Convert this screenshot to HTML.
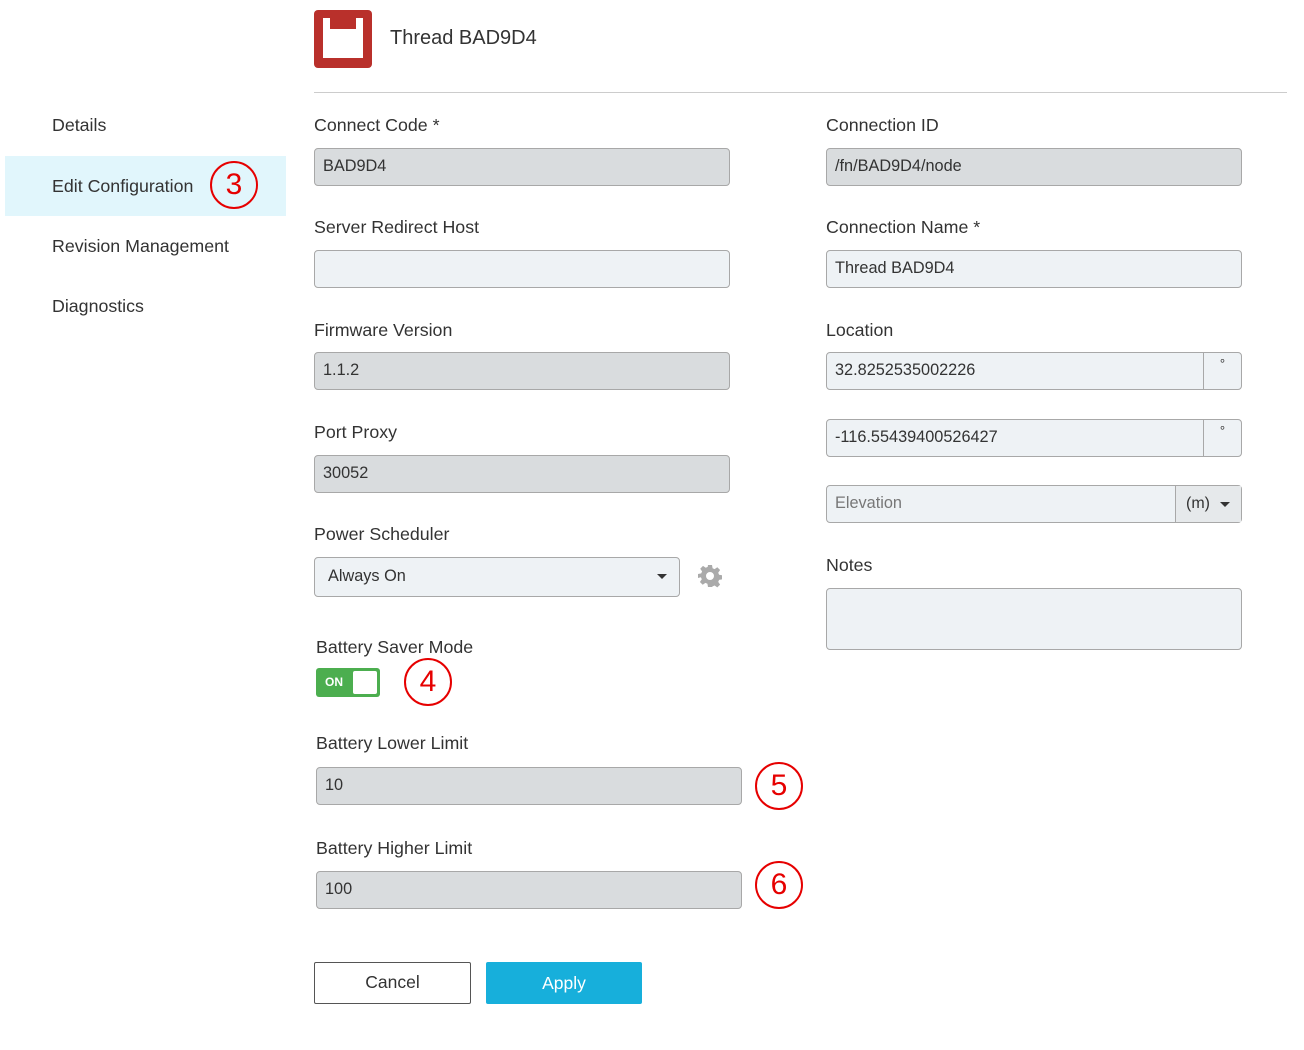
<!DOCTYPE html>
<html><head><style>
*{box-sizing:border-box;margin:0;padding:0}
body{width:1304px;height:1050px;background:#fff;font-family:"Liberation Sans",sans-serif;color:#333;position:relative;overflow:hidden}
.a{position:absolute}
.lbl{position:absolute;font-size:17.8px;color:#333}
.in{position:absolute;height:38px;border:1.5px solid #a8a8a8;border-radius:4px;font-size:16.3px;padding:0 8px;line-height:35px;color:#333}
.g{background:#d9dcde}
.l{background:#eef2f5}
.nav{position:absolute;left:52px;font-size:17.8px;color:#333}
.c{position:absolute;width:48px;height:48px;border:2.5px solid #e60000;border-radius:50%;color:#e60000;font-size:30px;text-align:center;line-height:43px}
.deg{position:absolute;right:0;top:0;bottom:0;width:38px;border-left:1.5px solid #a8a8a8;text-align:center;line-height:22px;font-size:13px}
</style></head><body>
<div class="a" style="left:314px;top:10px;width:58px;height:58px;background:#b9302b;border-radius:4px"></div>
<svg class="a" style="left:314px;top:10px" width="58" height="58"><path d="M9 8h7v11h26v-11h7v40h-40z" fill="#fff"/></svg>
<div class="a" style="left:390px;top:27px;font-size:20px;color:#333">Thread BAD9D4</div>
<div class="a" style="left:314px;top:92px;width:973px;height:1px;background:#ccc"></div>

<div class="a" style="left:5px;top:156px;width:281px;height:60px;background:#e1f6fc"></div>
<div class="nav" style="top:115px">Details</div>
<div class="nav" style="top:176px">Edit Configuration</div>
<div class="nav" style="top:236px">Revision Management</div>
<div class="nav" style="top:296px">Diagnostics</div>
<div class="c" style="left:210px;top:161px">3</div>

<div class="lbl" style="left:314px;top:115px">Connect Code *</div>
<div class="in g" style="left:314px;top:148px;width:416px">BAD9D4</div>
<div class="lbl" style="left:314px;top:217px">Server Redirect Host</div>
<div class="in l" style="left:314px;top:250px;width:416px"></div>
<div class="lbl" style="left:314px;top:320px">Firmware Version</div>
<div class="in g" style="left:314px;top:352px;width:416px">1.1.2</div>
<div class="lbl" style="left:314px;top:422px">Port Proxy</div>
<div class="in g" style="left:314px;top:455px;width:416px">30052</div>
<div class="lbl" style="left:314px;top:524px">Power Scheduler</div>
<div class="in l" style="left:314px;top:557px;width:366px;height:40px;padding-left:13px;line-height:37px">Always On<span style="position:absolute;right:12px;top:16px;border:5px solid transparent;border-top:5px solid #333;border-bottom:0"></span></div>
<svg class="a" style="left:698px;top:564px" width="24" height="24" viewBox="0 0 24 24"><path fill="#aaa" d="M10 1h4l.6 3.2 2 .9 2.7-1.9 2.8 2.8-1.9 2.7.9 2 3.2.6v4l-3.2.6-.9 2 1.9 2.7-2.8 2.8-2.7-1.9-2 .9L14 23h-4l-.6-3.2-2-.9-2.7 1.9-2.8-2.8 1.9-2.7-.9-2L0 14v-4l3.2-.6.9-2L2.2 4.7 5 1.9l2.7 1.9 2-.9zM12 8a4 4 0 100 8 4 4 0 000-8z"/></svg>
<div class="lbl" style="left:316px;top:637px">Battery Saver Mode</div>
<div class="a" style="left:316px;top:668px;width:64px;height:29px;background:#4cae4f;border-radius:3px"></div>
<div class="a" style="left:325px;top:675px;color:#fff;font-size:12px;font-weight:bold">ON</div>
<div class="a" style="left:353px;top:671px;width:24px;height:23px;background:#fff;border-radius:2px"></div>
<div class="c" style="left:404px;top:658px">4</div>
<div class="lbl" style="left:316px;top:733px">Battery Lower Limit</div>
<div class="in g" style="left:316px;top:767px;width:426px">10</div>
<div class="c" style="left:755px;top:762px">5</div>
<div class="lbl" style="left:316px;top:838px">Battery Higher Limit</div>
<div class="in g" style="left:316px;top:871px;width:426px">100</div>
<div class="c" style="left:755px;top:861px">6</div>

<div class="a" style="left:314px;top:962px;width:157px;height:42px;border:1.5px solid #555;border-radius:2px;text-align:center;line-height:39px;font-size:17.5px">Cancel</div>
<div class="a" style="left:486px;top:962px;width:156px;height:42px;background:#17afdb;border-radius:2px;text-align:center;line-height:42px;font-size:17.5px;color:#fff">Apply</div>

<div class="lbl" style="left:826px;top:115px">Connection ID</div>
<div class="in g" style="left:826px;top:148px;width:416px">/fn/BAD9D4/node</div>
<div class="lbl" style="left:826px;top:217px">Connection Name *</div>
<div class="in l" style="left:826px;top:250px;width:416px">Thread BAD9D4</div>
<div class="lbl" style="left:826px;top:320px">Location</div>
<div class="in l" style="left:826px;top:352px;width:416px">32.8252535002226<div class="deg">°</div></div>
<div class="in l" style="left:826px;top:419px;width:416px">-116.55439400526427<div class="deg">°</div></div>
<div class="in l" style="left:826px;top:485px;width:416px;color:#777">Elevation<div class="deg" style="width:66px;background:#e6e9eb;color:#333;font-size:16px;line-height:35px;text-align:left;padding-left:10px">(m)<span style="position:absolute;right:11px;top:16px;border:5px solid transparent;border-top:5px solid #333;border-bottom:0"></span></div></div>
<div class="lbl" style="left:826px;top:555px">Notes</div>
<div class="in l" style="left:826px;top:588px;width:416px;height:62px"></div>
</body></html>
